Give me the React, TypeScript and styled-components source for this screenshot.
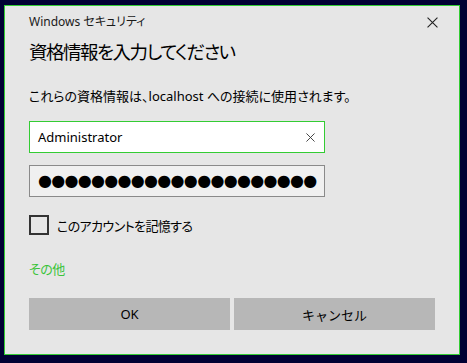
import styled, { createGlobalStyle } from 'styled-components'

const GlobalStyle = createGlobalStyle`
	html, body {
		margin: 0;
		padding: 0;
		background: #000033;
	}
	body {
		font-family: 'Noto Sans', 'Noto Sans CJK JP', sans-serif;
		font-feature-settings: 'palt';
	}
`

const Page = styled.div`
	width: 467px;
	height: 363px;
	padding: 5px 0 0 4px;
	box-sizing: border-box;
`

const Dialog = styled.div`
	width: 456px;
	height: 350px;
	box-sizing: border-box;
	border: 1px solid #33cc33;
	background: #e6e6e6;
	padding: 0 24px;
	display: flex;
	flex-direction: column;
	color: #000;
`

const TitleBar = styled.div`
	display: flex;
	justify-content: space-between;
	align-items: center;
	margin-top: 8px;
	height: 16px;
`

const TitleText = styled.span`
	font-size: 12px;
	line-height: 16px;
	color: #1a1a1a;
`

const CloseButton = styled.button`
	border: none;
	background: none;
	padding: 0;
	margin-right: -3px;
	width: 12px;
	height: 12px;
	display: flex;
	align-items: center;
	justify-content: center;
`

const Heading = styled.h1`
	margin: 8px 0 0;
	font-size: 18.5px;
	font-weight: 400;
	line-height: 28px;
	letter-spacing: -1.5px;
`

const Description = styled.p`
	margin: 20px 0 0;
	font-size: 13px;
	line-height: 20px;
`

const Field = styled.div<{ $active?: boolean; $gap: number }>`
	margin-top: ${(p) => p.$gap}px;
	width: 296px;
	height: 32px;
	box-sizing: border-box;
	border: 1px solid ${(p) => (p.$active ? '#33cc33' : '#8a8a8a')};
	background: ${(p) => (p.$active ? '#ffffff' : '#f0f0f0')};
	display: flex;
	align-items: center;
	padding: 0 9px 0 8px;
`

const FieldText = styled.span`
	flex: 1;
	font-size: 13px;
	line-height: 20px;
`

const Dots = styled.span`
	flex: 1;
	font-family: 'DejaVu Sans', sans-serif;
	font-size: 16px;
	line-height: 20px;
	letter-spacing: -0.7px;
	white-space: nowrap;
`

const CheckRow = styled.label`
	margin-top: 18px;
	display: flex;
	align-items: center;
	gap: 8px;
	height: 20px;
	font-size: 13px;
	letter-spacing: -0.6px;
`

const CheckBox = styled.span`
	width: 20px;
	height: 20px;
	box-sizing: border-box;
	border: 2px solid #333333;
	background: #e6e6e6;
`

const MoreLink = styled.a`
	margin-top: 24px;
	font-size: 13px;
	line-height: 20px;
	letter-spacing: -0.5px;
	color: #3bc43b;
	text-decoration: none;
`

const ButtonRow = styled.div`
	margin-top: 19px;
	display: grid;
	grid-template-columns: 1fr 1fr;
	gap: 4px;
`

const Button = styled.button`
	height: 32px;
	border: none;
	background: #b7b7b7;
	font-family: inherit;
	font-size: 13px;
	color: #000;
	padding: 0;
`

function CrossIcon({ size, color }: { size: number; color: string }) {
	return (
		<svg width={size} height={size} viewBox='0 0 10 10'>
			<path d='M0.5 0.5 L9.5 9.5 M9.5 0.5 L0.5 9.5' stroke={color} strokeWidth='1' fill='none' />
		</svg>
	)
}

export default function App() {
	return (
		<Page>
			<GlobalStyle />
			<Dialog>
				{/* Title bar */}
				<TitleBar>
					<TitleText>Windows セキュリティ</TitleText>
					<CloseButton>
						<CrossIcon size={11} color='#222' />
					</CloseButton>
				</TitleBar>
				<Heading>資格情報を入力してください</Heading>
				<Description>これらの資格情報は、localhost への接続に使用されます。</Description>
				{/* Credentials */}
				<Field $active $gap={15}>
					<FieldText>Administrator</FieldText>
					<CrossIcon size={9} color='#333' />
				</Field>
				<Field $gap={12}>
					<Dots>●●●●●●●●●●●●●●●●●●●●●</Dots>
				</Field>
				<CheckRow>
					<CheckBox />
					このアカウントを記憶する
				</CheckRow>
				<MoreLink href='#'>その他</MoreLink>
				{/* Actions */}
				<ButtonRow>
					<Button>OK</Button>
					<Button>キャンセル</Button>
				</ButtonRow>
			</Dialog>
		</Page>
	)
}
